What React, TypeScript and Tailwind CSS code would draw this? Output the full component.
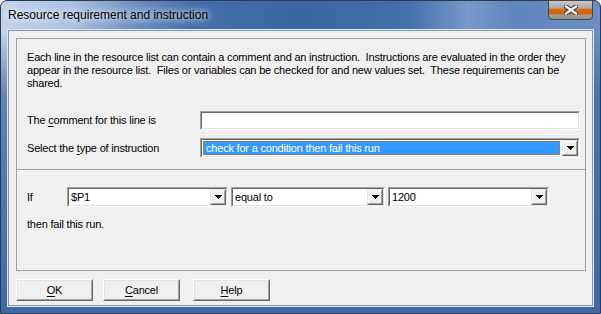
import React from "react";

function Arrow() {
  return (
    <div className="w-[16px] h-[16px] shrink-0 border border-t-[#e3e3e3] border-l-[#e3e3e3] border-b-[#696969] border-r-[#696969]">
      <div className="w-full h-full border border-t-white border-l-white border-b-[#a0a0a0] border-r-[#a0a0a0] bg-[#f0f0f0] flex items-center justify-center">
        <svg width="7" height="4" viewBox="0 0 7 4" shapeRendering="crispEdges">
          <rect x="0" y="0" width="7" height="1" fill="#000" />
          <rect x="1" y="1" width="5" height="1" fill="#000" />
          <rect x="2" y="2" width="3" height="1" fill="#000" />
          <rect x="3" y="3" width="1" height="1" fill="#000" />
        </svg>
      </div>
    </div>
  );
}

function Sunken({ className, children }: { className: string; children?: React.ReactNode }) {
  return (
    <div className={"border border-t-[#a0a0a0] border-l-[#a0a0a0] border-b-white border-r-white " + className}>
      <div className="h-full border border-t-[#696969] border-l-[#696969] border-b-[#e3e3e3] border-r-[#e3e3e3] bg-white flex items-stretch">
        {children}
      </div>
    </div>
  );
}

function Combo({ className, value }: { className: string; value: string }) {
  return (
    <Sunken className={className}>
      <div className="flex-1 flex items-center pl-[2px] text-black">{value}</div>
      <Arrow />
    </Sunken>
  );
}

function Btn({ className, u, rest }: { className: string; u: string; rest: string }) {
  return (
    <div className={"h-[22px] w-[77px] border border-t-white border-l-white border-b-[#696969] border-r-[#696969] " + className}>
      <div className="w-full h-full border border-t-[#e3e3e3] border-l-[#e3e3e3] border-b-[#a0a0a0] border-r-[#a0a0a0] bg-[#f0f0f0] flex items-center justify-center">
        <span>
          <span className="underline underline-offset-[2px]">{u}</span>
          {rest}
        </span>
      </div>
    </div>
  );
}

export default function App() {
  return (
    <div className="w-[601px] h-[314px] overflow-hidden bg-white">
      <div className="w-[601px] h-[314px] flex flex-col rounded-t-[7px] border border-[#2b3a52] bg-[linear-gradient(180deg,rgba(0,0,0,0)_0%,rgba(0,0,0,0)_10%,rgba(64,104,166,0.75)_30%,#3f69a7_100%),linear-gradient(90deg,#c3d4ea_0%,#aac1e1_12%,#6e91c4_22%,#456fad_32%,#3b66a4_50%,#4470ad_68%,#7899c9_78%,#5f85bd_86%,#6b8fc4_100%)]">
        {/* Title bar */}
        <div className="h-[28px] shrink-0 flex justify-between items-start">
          <div className="h-[28px] flex items-center pl-[7px] font-['Liberation_Sans',Arial,sans-serif] text-[12px] text-black [text-shadow:0_0_6px_#ffffff,0_0_10px_rgba(255,255,255,0.8)]">
            Resource requirement and instruction
          </div>
          <div className="mr-[7px] mt-[-1px] w-[45px] h-[20px] rounded-b-[4px] border border-[#464646] overflow-hidden bg-[linear-gradient(180deg,#c8c8c8_0%,#a9a9a9_40%,#d56a10_45%,#cf640a_72%,#a0a0a0_78%,#8e8e8e_100%)] flex items-center justify-center">
            <svg width="14" height="10" viewBox="0 0 14 10">
              <path d="M2 1.5L12 8.5M12 1.5L2 8.5" stroke="#3c3c3c" strokeWidth="4.2" strokeLinecap="square" />
              <path d="M2 1.5L12 8.5M12 1.5L2 8.5" stroke="#ffffff" strokeWidth="2.2" strokeLinecap="square" />
            </svg>
          </div>
        </div>
        {/* Body */}
        <div className="flex-1 px-[6px] pb-[6px] flex">
          <div className="flex-1 border border-[#dde6f1] shadow-[inset_0_0_0_1px_#8596ae] bg-[#f0f0f0] font-['Liberation_Sans',Arial,sans-serif] text-[11px] tracking-[-0.2px] text-black flex flex-col">
            <div className="mt-[8px] ml-[8px] w-[570px] border border-[#a0a0a0] flex flex-col">
              <div className="h-[131px] border-b border-[#a0a0a0] pt-[12px] pl-[10px] flex flex-col">
                <div className="whitespace-pre leading-[13px]">
                  {"Each line in the resource list can contain a comment and an instruction.  Instructions are evaluated in the order they\nappear in the resource list.  Files or variables can be checked for and new values set.  These requirements can be\nshared."}
                </div>
                <div className="mt-[21px] flex items-center">
                  <div className="w-[173px]">
                    The <span className="underline underline-offset-[2px]">c</span>omment for this line is
                  </div>
                  <Sunken className="w-[380px] h-[19px]" />
                </div>
                <div className="mt-[8px] flex items-center">
                  <div className="w-[173px]">
                    Select the <span className="underline underline-offset-[2px]">t</span>ype of instruction
                  </div>
                  <Sunken className="w-[380px] h-[20px]">
                    <div className="flex-1 m-[1px] mr-[2px] bg-[#3399ff] border border-dotted border-[#cc6600] text-white flex items-center pl-[2px]">
                      check for a condition then fail this run
                    </div>
                    <Arrow />
                  </Sunken>
                </div>
              </div>
              <div className="h-[100px] pt-[17px] pl-[10px] flex flex-col">
                <div className="flex items-center">
                  <div className="w-[40px]">If</div>
                  <Combo className="w-[161px] h-[20px]" value="$P1" />
                  <Combo className="ml-[3px] w-[154px] h-[20px]" value="equal to" />
                  <Combo className="ml-[3px] w-[161px] h-[20px]" value="1200" />
                </div>
                <div className="mt-[11px] leading-[13px]">then fail this run.</div>
              </div>
            </div>
            <div className="mt-[8px] ml-[8px] flex">
              <Btn className="" u="O" rest="K" />
              <Btn className="ml-[10px]" u="C" rest="ancel" />
              <Btn className="ml-[13px]" u="H" rest="elp" />
            </div>
          </div>
        </div>
      </div>
    </div>
  );
}
